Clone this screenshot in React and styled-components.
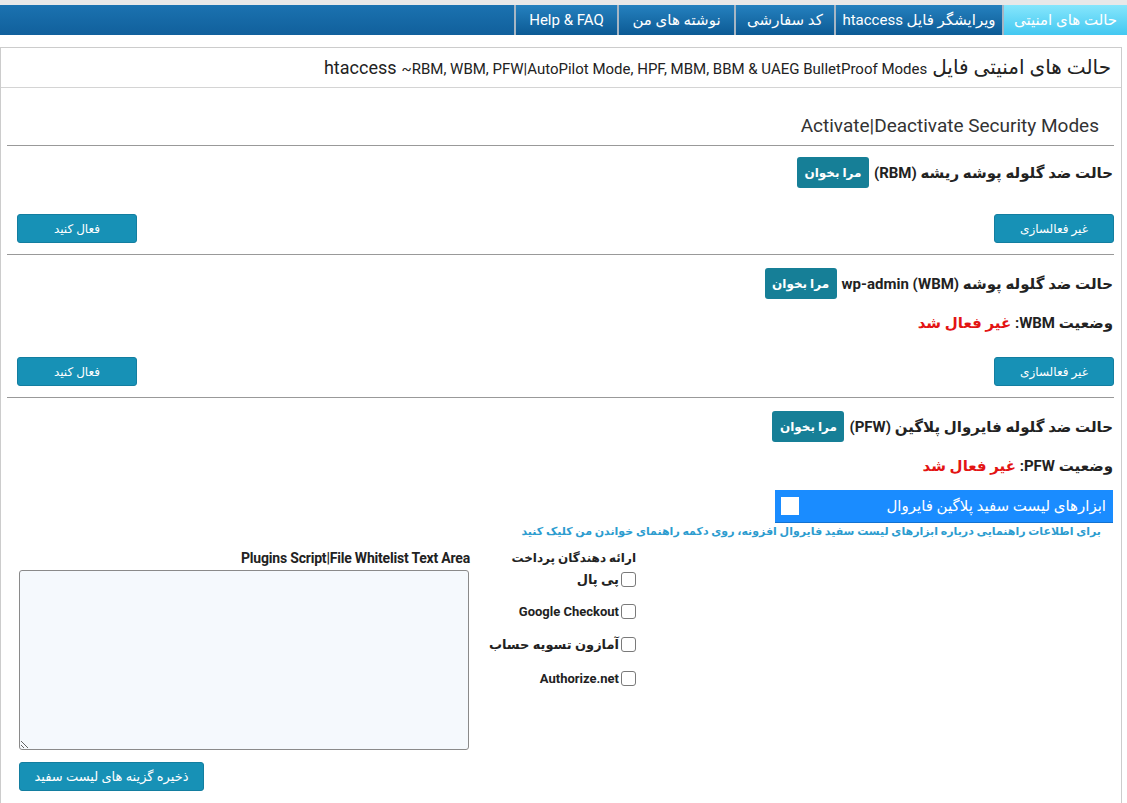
import React from "react";
import styled, { createGlobalStyle } from "styled-components";

const GlobalStyle = createGlobalStyle`
  html, body {
    margin: 0;
    padding: 0;
    background: #fff;
  }
  body {
    font-family: Roboto, "DejaVu Sans", sans-serif;
    color: #222;
  }
`;

const Page = styled.div`
  direction: rtl;
  border-top: 5px solid #e8e8e8;
`;

const TabBar = styled.nav`
  display: flex;
  height: 30px;
  background: linear-gradient(#1b72b0, #11609c);
`;

const Tab = styled.div`
  display: flex;
  align-items: center;
  justify-content: center;
  box-sizing: border-box;
  width: ${(p) => p.$w}px;
  border-left: 2px solid #a7b6c4;
  color: #fff;
  font-size: 15px;
  white-space: nowrap;
  background: ${(p) =>
    p.$active
      ? "linear-gradient(#86e6fc, #43c8f1)"
      : "linear-gradient(#2581bf, #0c5a94)"};
`;

const Panel = styled.section`
  margin: 12px 5px 0 0;
  border: 1px solid #ccc;
  border-bottom: none;
`;

const PanelHeader = styled.h2`
  display: flex;
  align-items: baseline;
  gap: 5px;
  margin: 0;
  height: 39px;
  line-height: 39px;
  padding-right: 10px;
  border-bottom: 1px solid #d4d4d4;
  font-size: 18px;
  font-weight: 400;
  color: #222;
  white-space: nowrap;
  overflow: hidden;
`;

const Fa = styled.span`
  font-size: 20px;
`;

const Latin = styled.span`
  direction: ltr;
  display: flex;
  align-items: baseline;
  gap: 5px;
`;

const Small = styled.span`
  font-size: 15px;
`;

const Content = styled.div`
  padding: 26px 7px 10px 6px;
`;

const Title = styled.h3`
  margin: 0 0 7px;
  padding-right: 15px;
  font-size: 19px;
  font-weight: 400;
  line-height: 24px;
  color: #333;
`;

const Section = styled.div`
  border-top: 1px solid #999;
  padding-bottom: ${(p) => p.$pb || 10}px;
`;

const HeadingRow = styled.div`
  display: flex;
  align-items: center;
  gap: 5px;
  margin-top: ${(p) => p.$mt || 12}px;
  height: 31px;
  padding-right: 1px;
`;

const Heading = styled.span`
  font-size: 15px;
  font-weight: 700;
  color: #222;
`;

const ReadButton = styled.button`
  height: 31px;
  width: 72px;
  border: none;
  border-radius: 3px;
  background: #167f97;
  color: #fff;
  font-family: inherit;
  font-size: 12px;
  font-weight: 700;
`;

const Status = styled.div`
  margin-top: ${(p) => p.$mt || 13}px;
  font-size: 15px;
  font-weight: 700;
  line-height: 22px;
  padding-right: 1px;
`;

const Off = styled.span`
  color: #e31414;
`;

const ActionRow = styled.div`
  display: flex;
  justify-content: space-between;
  margin-top: ${(p) => p.$mt}px;
  padding-left: 10px;
`;

const Button = styled.button`
  height: 29px;
  width: ${(p) => p.$w || 120}px;
  border: 1px solid #137ea0;
  border-radius: 3px;
  background: #1791b6;
  color: #fff;
  font-family: inherit;
  font-size: 12px;
`;

const BlueBox = styled.label`
  display: flex;
  align-items: center;
  justify-content: space-between;
  margin: 13px 1px 0 0;
  width: 325px;
  height: 32px;
  padding: 0 7px 0 6px;
  background: #1a8cff;
  color: #fff;
  font-size: 15px;
  border-bottom: 1px solid #1372d0;
`;

const WhiteBox = styled.span`
  width: 18px;
  height: 18px;
  background: #fff;
`;

const Help = styled.p`
  margin: 2px 13px 0 0;
  font-size: 11px;
  font-weight: 700;
  color: #2c9ccf;
  line-height: 14px;
`;

const Columns = styled.div`
  display: flex;
  direction: ltr;
  margin-top: 10px;
  padding-left: 12px;
  gap: 21px;
`;

const AreaCol = styled.div`
  width: 451px;
  display: flex;
  flex-direction: column;
  align-items: flex-end;
`;

const AreaLabel = styled.div`
  font-size: 14px;
  font-weight: 700;
  line-height: 18px;
  letter-spacing: -0.2px;
`;

const TextArea = styled.textarea`
  direction: rtl;
  box-sizing: border-box;
  width: 450px;
  height: 180px;
  margin-top: 3px;
  background: #f5f9fd;
  border: 1px solid #8a8a8a;
  border-radius: 3px;
  align-self: flex-start;
`;

const SaveButton = styled(Button)`
  align-self: flex-start;
  margin-top: 12px;
  font-size: 13px;
`;

const Providers = styled.div`
  direction: rtl;
  width: 145px;
  display: flex;
  flex-direction: column;
  align-items: flex-start;
  font-size: 13px;
  font-weight: 700;
  white-space: nowrap;
`;

const ProvTitle = styled.div`
  font-size: 12px;
  line-height: 18px;
`;

const ProvRow = styled.label`
  display: flex;
  align-items: center;
  gap: 2px;
  height: 20px;
  margin-top: ${(p) => p.$mt}px;
`;

const Check = styled.span`
  box-sizing: border-box;
  width: 15px;
  height: 15px;
  border: 1px solid #7a7a7a;
  border-radius: 3px;
  background: #fff;
`;

const tabs = [
  { label: "حالت های امنیتی", w: 125, active: true },
  { label: "ویرایشگر فایل htaccess", w: 168 },
  { label: "کد سفارشی", w: 100 },
  { label: "نوشته های من", w: 117 },
  { label: "Help & FAQ", w: 103 },
];

export default function App() {
  return (
    <Page>
      <GlobalStyle />
      <TabBar>
        {tabs.map((t) => (
          <Tab key={t.label} $w={t.w} $active={t.active}>
            {t.label}
          </Tab>
        ))}
      </TabBar>

      <Panel>
        <PanelHeader>
          <Fa>حالت های امنیتی فایل</Fa>
          <Latin>
            <span>htaccess</span>
            <Small>~RBM, WBM, PFW|AutoPilot Mode, HPF, MBM, BBM &amp; UAEG BulletProof Modes</Small>
          </Latin>
        </PanelHeader>

        <Content>
          <Title>Activate|Deactivate Security Modes</Title>

          <Section $pb={11}>
            <HeadingRow $mt={11}>
              <Heading>حالت ضد گلوله پوشه ریشه (RBM)</Heading>
              <ReadButton>مرا بخوان</ReadButton>
            </HeadingRow>
            <ActionRow $mt={26}>
              <Button>غیر فعالسازی</Button>
              <Button>فعال کنید</Button>
            </ActionRow>
          </Section>

          <Section $pb={11}>
            <HeadingRow $mt={13}>
              <Heading>حالت ضد گلوله پوشه wp-admin (WBM)&lrm;</Heading>
              <ReadButton>مرا بخوان</ReadButton>
            </HeadingRow>
            <Status $mt={13}>
              وضعیت WBM: <Off>غیر فعال شد</Off>
            </Status>
            <ActionRow $mt={23}>
              <Button>غیر فعالسازی</Button>
              <Button>فعال کنید</Button>
            </ActionRow>
          </Section>

          <Section>
            <HeadingRow $mt={13}>
              <Heading>حالت ضد گلوله فایروال پلاگین (PFW)</Heading>
              <ReadButton>مرا بخوان</ReadButton>
            </HeadingRow>
            <Status>
              وضعیت PFW: <Off>غیر فعال شد</Off>
            </Status>
            <BlueBox>
              <span>ابزارهای لیست سفید پلاگین فایروال</span>
              <WhiteBox />
            </BlueBox>
            <Help>
              برای اطلاعات راهنمایی درباره ابزارهای لیست سفید فایروال افزونه، روی دکمه راهنمای خواندن من کلیک کنید
            </Help>

            <Columns>
              <AreaCol>
                <AreaLabel>Plugins Script|File Whitelist Text Area</AreaLabel>
                <TextArea />
                <SaveButton $w={185}>ذخیره گزینه های لیست سفید</SaveButton>
              </AreaCol>
              <Providers>
                <ProvTitle>ارائه دهندگان پرداخت</ProvTitle>
                <ProvRow $mt={2}>
                  <Check />
                  پی پال
                </ProvRow>
                <ProvRow $mt={12}>
                  <Check />
                  Google Checkout
                </ProvRow>
                <ProvRow $mt={13}>
                  <Check />
                  آمازون تسویه حساب
                </ProvRow>
                <ProvRow $mt={14}>
                  <Check />
                  Authorize.net
                </ProvRow>
              </Providers>
            </Columns>
          </Section>
        </Content>
      </Panel>
    </Page>
  );
}
